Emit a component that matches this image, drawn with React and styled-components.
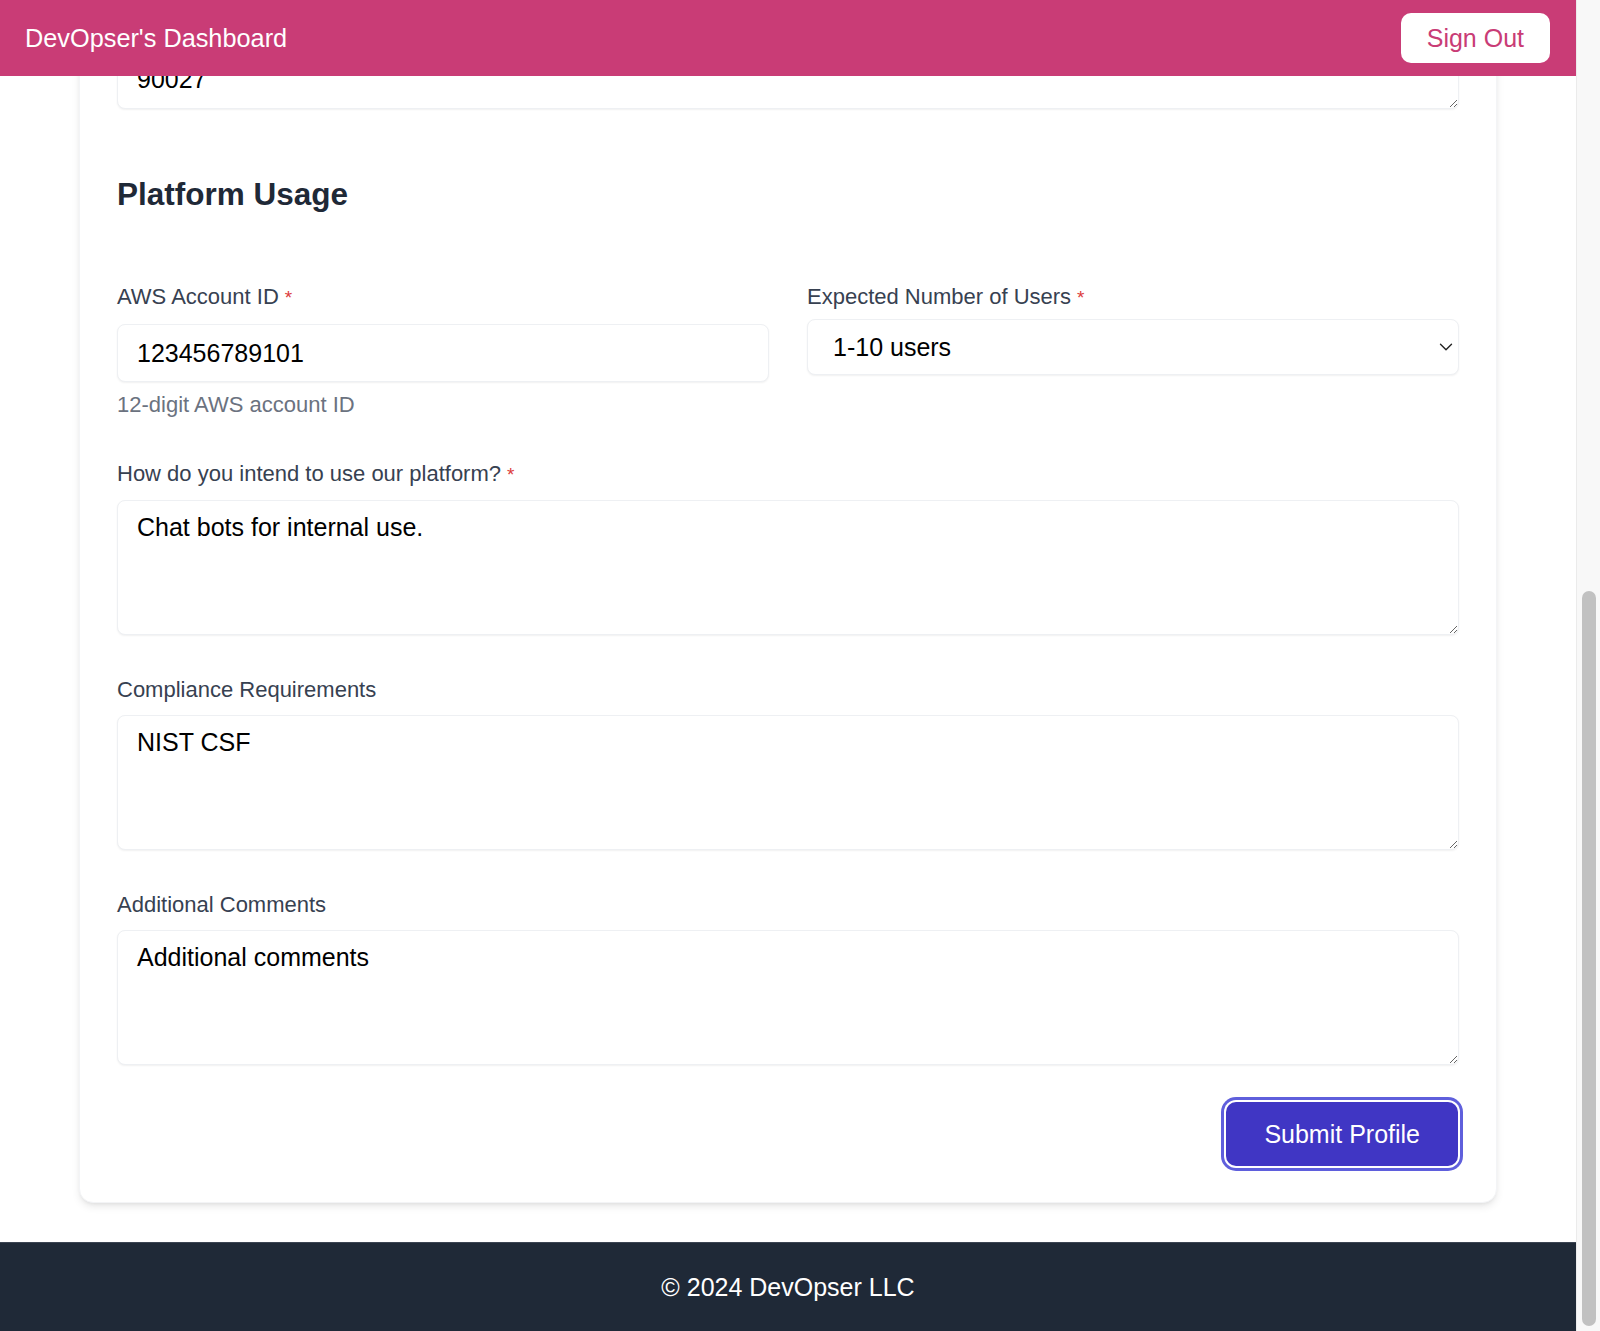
import React from "react";
import styled, { createGlobalStyle } from "styled-components";
import { ChevronDown } from "lucide-react";

const GlobalStyle = createGlobalStyle`
  html, body {
    margin: 0;
    padding: 0;
    background: #ffffff;
    overflow: hidden;
  }
  * { box-sizing: border-box; }
  body {
    font-family: "Liberation Sans", Arial, Helvetica, sans-serif;
    color: #111827;
  }
`;

const Shell = styled.div`
  display: flex;
  width: 100vw;
  height: 100vh;
`;

const Viewport = styled.div`
  flex: 1;
  height: 100vh;
  overflow: hidden;
  display: flex;
  flex-direction: column;
  justify-content: flex-end;
`;

const ScrollTrack = styled.div`
  width: 24px;
  height: 100vh;
  background: #f8f8f8;
  border-left: 1px solid #ebebeb;
  display: flex;
  flex-direction: column;
  padding: 0 4px 5px 5px;
`;

const ScrollThumb = styled.div`
  margin-top: ${(p) => p.$offset}px;
  flex: 1;
  border-radius: 7px;
  background: #c1c1c1;
`;

const Header = styled.header`
  position: fixed;
  top: 0;
  left: 0;
  right: 24px;
  height: 76px;
  background: #c93c76;
  display: flex;
  align-items: center;
  justify-content: space-between;
  padding: 0 26px 0 25px;
  z-index: 10;
`;

const Title = styled.h1`
  margin: 0;
  font-size: 25.3px;
  font-weight: 400;
  color: #ffffff;
  line-height: 30px;
`;

const SignOut = styled.button`
  height: 50px;
  padding: 0 26px;
  border: none;
  border-radius: 10px;
  background: #ffffff;
  color: #c93c76;
  font-family: inherit;
  font-size: 25px;
  cursor: pointer;
`;

const Main = styled.main`
  padding: 0 79px 39px;
`;

const Card = styled.section`
  background: #ffffff;
  border: 1px solid #f3f4f6;
  border-radius: 14px;
  box-shadow: 0 4px 8px -1px rgba(0, 0, 0, 0.1), 0 2px 4px -2px rgba(0, 0, 0, 0.08);
  padding: 38px 37px 36px;
  display: flex;
  flex-direction: column;
`;

const Fields = styled.div`
  display: flex;
  flex-direction: column;
  gap: 40px;
`;

const SectionHeading = styled.h2`
  margin: 65px 0 68px;
  font-size: 31.5px;
  line-height: 40px;
  font-weight: 700;
  color: #1f2937;
`;

const Grid = styled.div`
  display: grid;
  grid-template-columns: 1fr 1fr;
  column-gap: 38px;
`;

const Field = styled.div`
  display: flex;
  flex-direction: column;
`;

const Label = styled.label`
  font-size: 22px;
  line-height: 30px;
  color: #374151;
  margin-bottom: ${(p) => p.$gap ?? 10}px;
`;

const Required = styled.span`
  color: #dc3b3b;
  margin-left: 6px;
  font-size: 19px;
`;

const controlBase = `
  width: 100%;
  border: 1px solid #eef0f3;
  border-radius: 8px;
  background: #ffffff;
  box-shadow: 0 1px 2px rgba(0, 0, 0, 0.06);
  font-family: "Liberation Sans", Arial, Helvetica, sans-serif;
  font-size: 25px;
  color: #000000;
  outline: none;
`;

const TextInput = styled.input`
  ${controlBase}
  height: 58px;
  padding: 0 19px;
`;

const Helper = styled.p`
  margin: 9px 0 0;
  font-size: 22px;
  line-height: 28px;
  color: #6b7280;
`;

const SelectWrap = styled.div`
  position: relative;
`;

const Select = styled.select`
  ${controlBase}
  height: 56px;
  padding: 0 40px 0 25px;
  appearance: none;
  -webkit-appearance: none;
`;

const SelectIcon = styled(ChevronDown)`
  position: absolute;
  right: 2px;
  top: 50%;
  transform: translateY(-50%);
  color: #222222;
  pointer-events: none;
`;

const TextArea = styled.textarea`
  ${controlBase}
  display: block;
  height: ${(p) => (p.$height ? `${p.$height}px` : "auto")};
  line-height: 28px;
  padding: 12px 19px;
  resize: vertical;
`;

const AddressArea = styled(TextArea)`
  padding-bottom: 15px;
`;

const Actions = styled.div`
  display: flex;
  justify-content: flex-end;
  margin-top: 37px;
  padding-right: 1px;
`;

const SubmitButton = styled.button`
  height: 64px;
  padding: 0 38px;
  border: none;
  border-radius: 10px;
  background: #4036c4;
  color: #ffffff;
  font-family: inherit;
  font-size: 25px;
  cursor: pointer;
  box-shadow: 0 0 0 2px #ffffff, 0 0 0 5px #5f5fdc;
`;

const Footer = styled.footer`
  height: 89px;
  flex-shrink: 0;
  background: #1f2937;
  border-top: 1px solid #3b4452;
  display: flex;
  align-items: center;
  justify-content: center;
  color: #ffffff;
  font-size: 25px;
`;

function RequiredMark() {
  return <Required>*</Required>;
}

export default function App() {
  return (
    <>
      <GlobalStyle />
      <Shell>
        <Viewport>
          <Header>
            <Title>DevOpser's Dashboard</Title>
            <SignOut type="button">Sign Out</SignOut>
          </Header>
          <Main>
            <Card>
              <AddressArea
                rows={3}
                readOnly
                aria-label="Business Address"
                defaultValue={"1234 Sunset Blvd\nLos Angeles, CA\n90027"}
              />

              <SectionHeading>Platform Usage</SectionHeading>

              <Fields>
                <Grid>
                  <Field>
                    <Label $gap={11}>
                      AWS Account ID
                      <RequiredMark />
                    </Label>
                    <TextInput type="text" readOnly defaultValue="123456789101" />
                    <Helper>12-digit AWS account ID</Helper>
                  </Field>
                  <Field>
                    <Label $gap={6}>
                      Expected Number of Users
                      <RequiredMark />
                    </Label>
                    <SelectWrap>
                      <Select defaultValue="1-10">
                        <option value="1-10">1-10 users</option>
                        <option value="11-50">11-50 users</option>
                        <option value="51-200">51-200 users</option>
                        <option value="200+">200+ users</option>
                      </Select>
                      <SelectIcon size={22} strokeWidth={1.5} />
                    </SelectWrap>
                  </Field>
                </Grid>

                <Field>
                  <Label>
                    How do you intend to use our platform?
                    <RequiredMark />
                  </Label>
                  <TextArea $height={135} readOnly defaultValue="Chat bots for internal use." />
                </Field>

                <Field>
                  <Label>Compliance Requirements</Label>
                  <TextArea $height={135} readOnly defaultValue="NIST CSF" />
                </Field>

                <Field>
                  <Label>Additional Comments</Label>
                  <TextArea $height={135} readOnly defaultValue="Additional comments" />
                </Field>
              </Fields>

              <Actions>
                <SubmitButton type="button">Submit Profile</SubmitButton>
              </Actions>
            </Card>
          </Main>
          <Footer>© 2024 DevOpser LLC</Footer>
        </Viewport>
        <ScrollTrack>
          <ScrollThumb $offset={591} />
        </ScrollTrack>
      </Shell>
    </>
  );
}
